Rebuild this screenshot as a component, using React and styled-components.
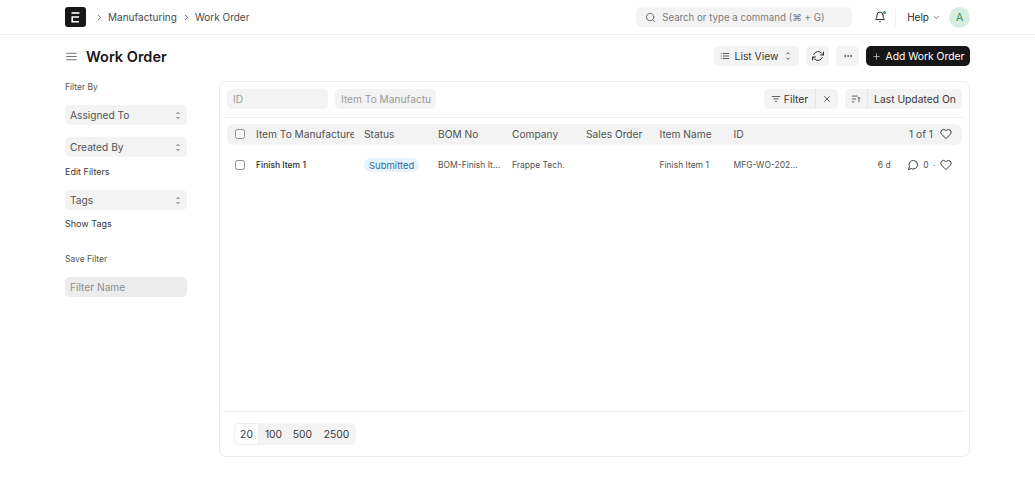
import React from 'react';
import styled, { createGlobalStyle } from 'styled-components';
import { FiSearch, FiBell, FiChevronDown, FiChevronRight, FiRefreshCw, FiMoreHorizontal, FiPlus, FiX, FiHeart, FiMessageCircle, FiMenu, FiList } from 'react-icons/fi';

const GlobalStyle = createGlobalStyle`
  html, body { margin: 0; padding: 0; background: #fff; }
  body { font-family: Inter, "Liberation Sans", sans-serif; color: #383838; width: 1035px; height: 492px; overflow: hidden; }
  * { box-sizing: border-box; }
`;

const Navbar = styled.header`
  height: 35px;
  padding: 0 65px;
  display: flex;
  align-items: center;
  border-bottom: 1px solid #f0f0f0;
`;

const Logo = styled.div`
  width: 21px;
  height: 20px;
  border-radius: 3px;
  background: #171717;
  display: flex;
  align-items: center;
  justify-content: center;
  margin-right: 9px;
`;

const Crumb = styled.span`
  display: flex;
  align-items: center;
  gap: 4px;
  font-size: 10px;
  color: #4a4a4a;
  margin-right: 5px;
  svg { color: #333; width: 9px; height: 9px; }
`;

const SearchBox = styled.div`
  margin-left: auto;
  width: 216px;
  height: 20px;
  border-radius: 5px;
  background: #f3f3f3;
  display: flex;
  align-items: center;
  gap: 6px;
  padding-left: 9px;
  font-size: 9.7px;
  color: #7c7c7c;
  svg { width: 11px; height: 11px; color: #666; }
`;

const BellWrap = styled.div`
  position: relative;
  width: 15px;
  height: 15px;
  margin-left: 20px;
  display: flex;
  align-items: center;
  justify-content: center;
  svg { width: 12px; height: 12px; color: #333; }
`;

const BellDot = styled.span`
  position: absolute;
  top: 1px;
  right: 1px;
  width: 3px;
  height: 3px;
  border-radius: 50%;
  background: #30a66d;
`;

const NavDivider = styled.span`
  width: 1px;
  height: 18px;
  background: #f0f0f0;
  margin: 0 11px 0 8px;
`;

const HelpLink = styled.span`
  display: flex;
  align-items: center;
  gap: 3px;
  font-size: 10px;
  color: #2b2b2b;
  svg { width: 9px; height: 9px; color: #555; }
`;

const Avatar = styled.div`
  width: 21px;
  height: 21px;
  margin-left: 8px;
  border-radius: 50%;
  background: #d6eee0;
  color: #3a8a63;
  font-size: 10.5px;
  display: flex;
  align-items: center;
  justify-content: center;
`;

const PageHead = styled.div`
  height: 46px;
  padding: 0 65px 4px;
  display: flex;
  align-items: center;
  gap: 7px;
`;

const MenuIcon = styled(FiMenu)`
  width: 13px;
  height: 13px;
  color: #555;
  stroke-width: 1.5;
  margin-right: 1px;
`;

const Title = styled.h1`
  margin: 0 auto 0 0;
  font-size: 14.5px;
  font-weight: 600;
  color: #171717;
`;

const GreyButton = styled.button`
  width: ${p => p.$w}px;
  height: 20px;
  border: 0;
  border-radius: 5px;
  background: #f3f3f3;
  padding: 0;
  display: flex;
  align-items: center;
  justify-content: center;
  gap: 5px;
  font-family: inherit;
  font-size: 10.3px;
  color: #383838;
  svg { width: ${p => p.$icon || 10}px; height: ${p => p.$icon || 10}px; }
`;

const PrimaryButton = styled(GreyButton)`
  background: #171717;
  color: #fff;
  svg { width: 9px; height: 9px; color: #ccc; }
`;

const Body = styled.div`
  padding: 0 65px;
  display: flex;
  align-items: flex-start;
`;

const Sidebar = styled.aside`
  width: 122px;
  margin-right: 32px;
  display: flex;
  flex-direction: column;
`;

const SideLabel = styled.div`
  font-size: 8.5px;
  color: #555;
  height: 11px;
  line-height: 11px;
  margin-top: ${p => p.$top || 0}px;
`;

const SideSelect = styled.div`
  height: 20px;
  margin-top: ${p => p.$top || 0}px;
  border-radius: 5px;
  background: #f3f3f3;
  padding: 0 6px 0 5px;
  display: flex;
  align-items: center;
  justify-content: space-between;
  font-size: 10.2px;
  color: #525252;
`;

const SideLink = styled.div`
  font-size: 9px;
  color: #383838;
  height: 12px;
  line-height: 12px;
  margin-top: ${p => p.$top || 0}px;
`;

const NameInput = styled.div`
  height: 20px;
  margin-top: 12px;
  border-radius: 5px;
  background: #ececec;
  padding: 0 5px;
  display: flex;
  align-items: center;
  font-size: 10.2px;
  color: #8c8c8c;
`;

const Card = styled.section`
  width: 751px;
  height: 376px;
  border: 1px solid #ededed;
  border-radius: 7px;
  display: flex;
  flex-direction: column;
`;

const FilterBar = styled.div`
  height: 36px;
  margin: 0 3px;
  padding: 0 4px 1px;
  display: flex;
  align-items: center;
  gap: 7px;
  border-bottom: 1px solid #f0f0f0;
`;

const FieldInput = styled.div`
  width: 101px;
  height: 20px;
  border-radius: 5px;
  background: #f3f3f3;
  padding: 0 6px;
  display: flex;
  align-items: center;
  font-size: 10.2px;
  color: #9a9a9a;
  overflow: hidden;
  white-space: nowrap;
`;

const ButtonGroup = styled.div`
  height: 20px;
  border-radius: 5px;
  background: #f3f3f3;
  display: flex;
  align-items: stretch;
  margin-left: ${p => (p.$push ? 'auto' : '0')};
  font-size: 10.3px;
  color: #383838;
`;

const GroupPart = styled.div`
  display: flex;
  align-items: center;
  gap: 3px;
  width: ${p => p.$w}px;
  justify-content: center;
  border-left: ${p => (p.$split ? '1px solid #e6e6e6' : '0')};
  svg { width: 10px; height: 10px; color: #444; }
`;

const ListRow = styled.div`
  display: grid;
  grid-template-columns: 29px 108px 74px 74px 74px 73.5px 74px 74px 1fr;
  align-items: center;
  margin: 0 7px;
  height: ${p => p.$h}px;
  margin-top: ${p => p.$top || 0}px;
  padding-bottom: ${p => (p.$head ? 1 : 0)}px;
  border-radius: 7px;
  background: ${p => (p.$head ? '#f3f3f3' : 'transparent')};
  font-size: ${p => (p.$head ? 10.2 : 8.5)}px;
  color: #525252;
`;

const Check = styled.span`
  width: 10px;
  height: 10px;
  margin-left: 8px;
  border: 1px solid #8c8c8c;
  border-radius: 2.5px;
  background: #fff;
  display: block;
`;

const Cell = styled.span`
  overflow: hidden;
  white-space: nowrap;
  font-weight: ${p => (p.$bold ? 500 : 400)};
  color: ${p => (p.$bold ? '#2b2b2b' : 'inherit')};
  margin-right: ${p => (p.$clip ? 10 : 0)}px;
`;

const StatusPill = styled.span`
  justify-self: start;
  height: 14px;
  padding: 0 5px;
  border-radius: 7px;
  background: #e6f4fb;
  color: #2b6f9e;
  font-size: 9.5px;
  display: flex;
  align-items: center;
`;

const RowEnd = styled.div`
  display: flex;
  align-items: center;
  justify-content: flex-end;
  white-space: nowrap;
  font-size: ${p => (p.$head ? 10.2 : 8.5)}px;
  padding-right: 10px;
  gap: ${p => (p.$head ? 7 : 4.5)}px;
  color: #525252;
  svg { width: 12px; height: 12px; color: #383838; }
`;

const AgeText = styled.span`
  margin-right: 12px;
`;

const Comments = styled.span`
  display: flex;
  align-items: center;
  gap: 4px;
  svg { width: 12px; height: 12px; }
`;

const Footer = styled.div`
  margin: auto 3px 0;
  height: 45px;
  border-top: 1px solid #f0f0f0;
  padding: 10px 11px 0;
`;

const PageSizes = styled.div`
  display: inline-flex;
  height: 22px;
  border-radius: 5px;
  background: #f3f3f3;
  font-size: 10.3px;
  color: #383838;
  overflow: hidden;
`;

const SizeButton = styled.span`
  display: flex;
  align-items: center;
  justify-content: center;
  width: ${p => p.$w}px;
  background: ${p => (p.$active ? '#fff' : 'transparent')};
  border: ${p => (p.$active ? '1px solid #f0f0f0' : '0')};
  border-radius: ${p => (p.$active ? '5px 0 0 5px' : '0')};
`;

const Updown = () => (
  <svg width="6" height="9" viewBox="0 0 6 9" fill="none" stroke="#555" strokeWidth="0.9">
    <path d="M1.5 3 L3 1.5 L4.5 3" />
    <path d="M1.5 6 L3 7.5 L4.5 6" />
  </svg>
);

const SortIcon = () => (
  <svg viewBox="0 0 12 12" fill="none" stroke="currentColor" strokeWidth="1">
    <path d="M1 2.5 H8 M1 6 H6 M1 9.5 H4" />
    <path d="M9.5 10 V4 M8 5.5 L9.5 4 L11 5.5" />
  </svg>
);

const FilterIcon = () => (
  <svg viewBox="0 0 12 12" fill="none" stroke="currentColor" strokeWidth="1">
    <path d="M1 3 H11 M3 6 H9 M5 9 H7" />
  </svg>
);

const columns = ['Status', 'BOM No', 'Company', 'Sales Order', 'Item Name', 'ID'];

export default function App() {
  return (
    <>
      <GlobalStyle />
      <Navbar>
        <Logo>
          <svg width="9" height="11" viewBox="0 0 9 11" fill="none" stroke="#fff" strokeWidth="1.6">
            <path d="M0.5 1 H8.5" />
            <path d="M8 5 H1.2 V9.8 H8" />
          </svg>
        </Logo>
        <Crumb><FiChevronRight />Manufacturing</Crumb>
        <Crumb><FiChevronRight />Work Order</Crumb>
        <SearchBox><FiSearch />Search or type a command (⌘ + G)</SearchBox>
        <BellWrap><FiBell /><BellDot /></BellWrap>
        <NavDivider />
        <HelpLink>Help<FiChevronDown /></HelpLink>
        <Avatar>A</Avatar>
      </Navbar>

      <PageHead>
        <MenuIcon />
        <Title>Work Order</Title>
        <GreyButton $w={85}><FiList />List View<Updown /></GreyButton>
        <GreyButton $w={23} $icon={12}><FiRefreshCw /></GreyButton>
        <GreyButton $w={23}><FiMoreHorizontal /></GreyButton>
        <PrimaryButton $w={104}><FiPlus />Add Work Order</PrimaryButton>
      </PageHead>

      <Body>
        <Sidebar>
          <SideLabel $top={1}>Filter By</SideLabel>
          <SideSelect $top={12}>Assigned To<Updown /></SideSelect>
          <SideSelect $top={12}>Created By<Updown /></SideSelect>
          <SideLink $top={9}>Edit Filters</SideLink>
          <SideSelect $top={12}>Tags<Updown /></SideSelect>
          <SideLink $top={8}>Show Tags</SideLink>
          <SideLabel $top={24}>Save Filter</SideLabel>
          <NameInput>Filter Name</NameInput>
        </Sidebar>

        <Card>
          <FilterBar>
            <FieldInput>ID</FieldInput>
            <FieldInput>Item To Manufactu</FieldInput>
            <ButtonGroup $push>
              <GroupPart $w={51}><FilterIcon />Filter</GroupPart>
              <GroupPart $w={23} $split><FiX /></GroupPart>
            </ButtonGroup>
            <ButtonGroup>
              <GroupPart $w={22}><SortIcon /></GroupPart>
              <GroupPart $w={95} $split>Last Updated On</GroupPart>
            </ButtonGroup>
          </FilterBar>

          <ListRow $head $h={21} $top={6}>
            <Check />
            <Cell $clip>Item To Manufacture</Cell>
            {columns.map(c => <Cell key={c}>{c}</Cell>)}
            <RowEnd $head>1 of 1<FiHeart /></RowEnd>
          </ListRow>

          <ListRow $h={40}>
            <Check />
            <Cell $bold>Finish Item 1</Cell>
            <StatusPill>Submitted</StatusPill>
            <Cell>BOM-Finish It...</Cell>
            <Cell>Frappe Tech.</Cell>
            <Cell />
            <Cell>Finish Item 1</Cell>
            <Cell>MFG-WO-202...</Cell>
            <RowEnd>
              <AgeText>6 d</AgeText>
              <Comments><FiMessageCircle />0</Comments>
              ·
              <FiHeart />
            </RowEnd>
          </ListRow>

          <Footer>
            <PageSizes>
              <SizeButton $w={25} $active>20</SizeButton>
              <SizeButton $w={29}>100</SizeButton>
              <SizeButton $w={29}>500</SizeButton>
              <SizeButton $w={39}>2500</SizeButton>
            </PageSizes>
          </Footer>
        </Card>
      </Body>
    </>
  );
}
